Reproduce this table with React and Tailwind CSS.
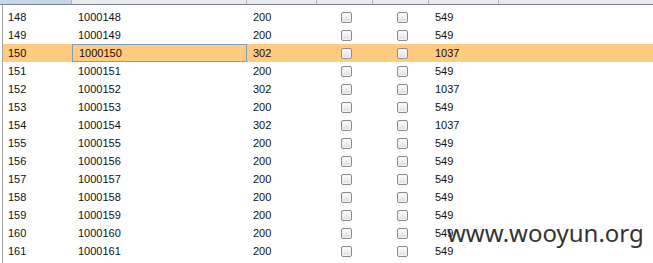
import React from 'react';

const rows = [
  { n: 148, id: '1000148', code: '200', len: '549' },
  { n: 149, id: '1000149', code: '200', len: '549' },
  { n: 150, id: '1000150', code: '302', len: '1037', selected: true },
  { n: 151, id: '1000151', code: '200', len: '549' },
  { n: 152, id: '1000152', code: '302', len: '1037' },
  { n: 153, id: '1000153', code: '200', len: '549' },
  { n: 154, id: '1000154', code: '302', len: '1037' },
  { n: 155, id: '1000155', code: '200', len: '549' },
  { n: 156, id: '1000156', code: '200', len: '549' },
  { n: 157, id: '1000157', code: '200', len: '549' },
  { n: 158, id: '1000158', code: '200', len: '549' },
  { n: 159, id: '1000159', code: '200', len: '549' },
  { n: 160, id: '1000160', code: '200', len: '549' },
  { n: 161, id: '1000161', code: '200', len: '549' },
];

function Checkbox() {
  return (
    <span className="block w-[11px] h-[11px] rounded-[2px] border border-[#8c8c8c] bg-gradient-to-b from-white to-[#dcdde0] shadow-[inset_0_0_0_1px_#f4f4f4]" />
  );
}

export default function App() {
  return (
    <div className="relative w-[653px] h-[263px] overflow-hidden bg-white text-[11px] text-[#111]" style={{ fontFamily: '"Liberation Sans", Arial, sans-serif' }}>
      {/* cabeçalho (só a borda inferior aparece) */}
      <div className="relative z-10 flex h-[5px] border-b border-[#80848a]">
        <div className="w-[72px] bg-[#c6d7e9] border-r border-[#a9b6c4]" />
        <div className="w-[175px] bg-[#e9ebef] border-r border-[#b4b8be]" />
        <div className="w-[70px] bg-[#e9ebef] border-r border-[#b4b8be]" />
        <div className="w-[56px] bg-[#e9ebef] border-r border-[#b4b8be]" />
        <div className="w-[56px] bg-[#e9ebef] border-r border-[#b4b8be]" />
        <div className="w-[70px] bg-[#e9ebef] border-r border-[#b4b8be]" />
        <div className="flex-1 bg-[#e9ebef]" />
      </div>

      <div className="h-[258px] overflow-hidden ml-[2px] border-l border-[#a3a3a3]">
        <div className="-mt-[15px]">
          {/* linha 147, quase toda escondida sob o cabeçalho */}
          <div className="flex h-[18px] items-center">
            <div className="w-[69px]" />
            <div className="w-[175px]" />
            <div className="w-[70px]" />
            <div className="w-[56px] flex justify-center pl-[2px]"><Checkbox /></div>
            <div className="w-[56px] flex justify-center pl-[2px]"><Checkbox /></div>
          </div>
          {rows.map((r) => (
            <div key={r.n} className={`flex h-[18px] items-center ${r.selected ? 'bg-[#fecb80] text-[#2a0606]' : ''}`}>
              <div className="w-[69px] pl-[5px]">{r.n}</div>
              <div className={`w-[175px] h-full flex items-center pl-[6px] ${r.selected ? 'border border-[#7f9dbd] pl-[5px]' : ''}`}>{r.id}</div>
              <div className="w-[70px] pl-[6px]">{r.code}</div>
              <div className="w-[56px] flex justify-center pl-[2px]"><Checkbox /></div>
              <div className="w-[56px] flex justify-center pl-[2px]"><Checkbox /></div>
              <div className="w-[70px] pl-[6px]">{r.len}</div>
              <div className="flex-1" />
            </div>
          ))}
        </div>
      </div>

      <div className="absolute left-[447px] top-[221px] text-[24px] leading-none text-[#333]" style={{ fontFamily: '"Noto Sans", sans-serif' }}>
        www.wooyun.org
      </div>
    </div>
  );
}
